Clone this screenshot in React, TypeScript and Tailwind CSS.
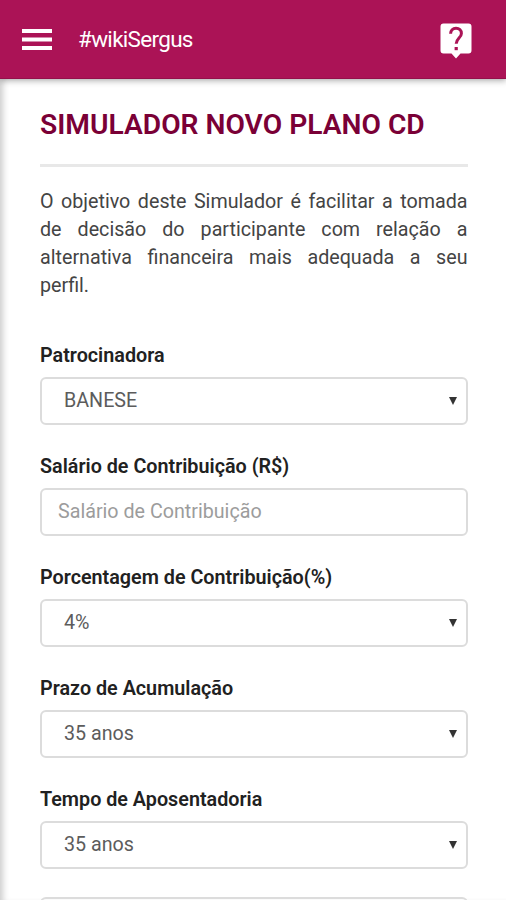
import { useState } from 'react';

interface IField {
  label: string;
  type: 'select' | 'input';
  options?: string[];
}

const fields: IField[] = [
  { label: 'Patrocinadora', type: 'select', options: ['BANESE', 'SERGUS'] },
  { label: 'Salário de Contribuição (R$)', type: 'input' },
  {
    label: 'Porcentagem de Contribuição(%)',
    type: 'select',
    options: ['4%', '5%', '6%'],
  },
  {
    label: 'Prazo de Acumulação',
    type: 'select',
    options: ['35 anos', '30 anos', '25 anos'],
  },
  {
    label: 'Tempo de Aposentadoria',
    type: 'select',
    options: ['35 anos', '30 anos', '25 anos'],
  },
];

const Header = () => {
  return (
    <header className="relative z-10 h-[79px] shrink-0 bg-[#ab1356] border-b border-[#94104a] shadow-[0_2px_6px_rgba(0,0,0,0.3)] flex items-center pt-px pl-[22px] pr-[34px]">
      <button aria-label="Menu">
        <svg width="30" height="21" viewBox="0 0 30 21" fill="white">
          <rect y="0" width="30" height="4" />
          <rect y="8.5" width="30" height="4" />
          <rect y="17" width="30" height="4" />
        </svg>
      </button>
      <h1 className="ml-[26px] pt-px text-[22.5px] tracking-[-0.7px] text-white">
        #wikiSergus
      </h1>
      <button aria-label="Ajuda" className="ml-auto pt-[2px]">
        <svg width="32" height="36" viewBox="0 0 32 36">
          <path
            d="M3.5 0.5h25a3 3 0 0 1 3 3v24a3 3 0 0 1-3 3h-8L16 35.5l-4.5-5h-8a3 3 0 0 1-3-3v-24a3 3 0 0 1 3-3z"
            fill="white"
          />
          <path
            d="M10.6 10.8c0-3.3 2.2-5.6 5.4-5.6s5.4 2.1 5.4 5.2c0 4.4-5.2 5-5.2 10.4"
            fill="none"
            stroke="#ab1356"
            strokeWidth="3"
          />
          <rect x="14.6" y="24" width="3.2" height="3.2" fill="#ab1356" />
        </svg>
      </button>
    </header>
  );
};

const Field = ({ label, type, options }: IField) => {
  const [value, setValue] = useState(options ? options[0] : '');

  return (
    <div className="h-[111px]">
      <label className="block mb-[7px] text-[19.75px] leading-7 font-semibold text-[#212121]">
        {label}
      </label>
      {type === 'select' ? (
        <div className="grid items-center">
          <select
            className="col-start-1 row-start-1 appearance-none w-full h-12 rounded-md border-2 border-[#dcdcdc] bg-white pl-[22px] pb-px text-[19.7px] text-[#5c5c5c] outline-none"
            value={value}
            onChange={(e) => setValue(e.target.value)}
          >
            {options?.map((item) => (
              <option key={item}>{item}</option>
            ))}
          </select>
          <svg
            className="col-start-1 row-start-1 justify-self-end mr-[11px] pointer-events-none"
            width="8"
            height="8"
            viewBox="0 0 8 8"
          >
            <path d="M0 0h8L4 8z" fill="#333" />
          </svg>
        </div>
      ) : (
        <input
          type="text"
          className="w-full h-12 rounded-md border-2 border-[#dcdcdc] pl-4 pb-px text-[19.7px] text-[#5c5c5c] placeholder:text-[#9c9c9c] outline-none"
          placeholder="Salário de Contribuição"
          value={value}
          onChange={(e) => setValue(e.target.value)}
        />
      )}
    </div>
  );
};

const App = () => {
  return (
    <div className="h-[900px] w-full overflow-hidden flex flex-col bg-white font-['Roboto',sans-serif]">
      <Header />
      <main className="flex-1 min-h-0 overflow-hidden pl-10 pr-[38.5px] shadow-[inset_7px_0_6px_-4px_rgba(0,0,0,0.2)]">
        <h2 className="pt-[30px] text-[28.2px] leading-8 font-semibold text-[#7a0036]">
          SIMULADOR NOVO PLANO CD
        </h2>
        <hr className="mt-[23px] border-t-[3px] border-[#e8e8e8]" />
        <p className="mt-[21px] mb-[42px] text-[19.7px] leading-[28px] text-justify text-[#444]">
          O objetivo deste Simulador é facilitar a tomada de decisão do
          participante com relação a alternativa financeira mais adequada a seu
          perfil.
        </p>
        {fields.map((item) => (
          <Field key={item.label} {...item} />
        ))}
        <div className="h-12 rounded-md border-2 border-[#dcdcdc]" />
      </main>
    </div>
  );
};

export default App;
